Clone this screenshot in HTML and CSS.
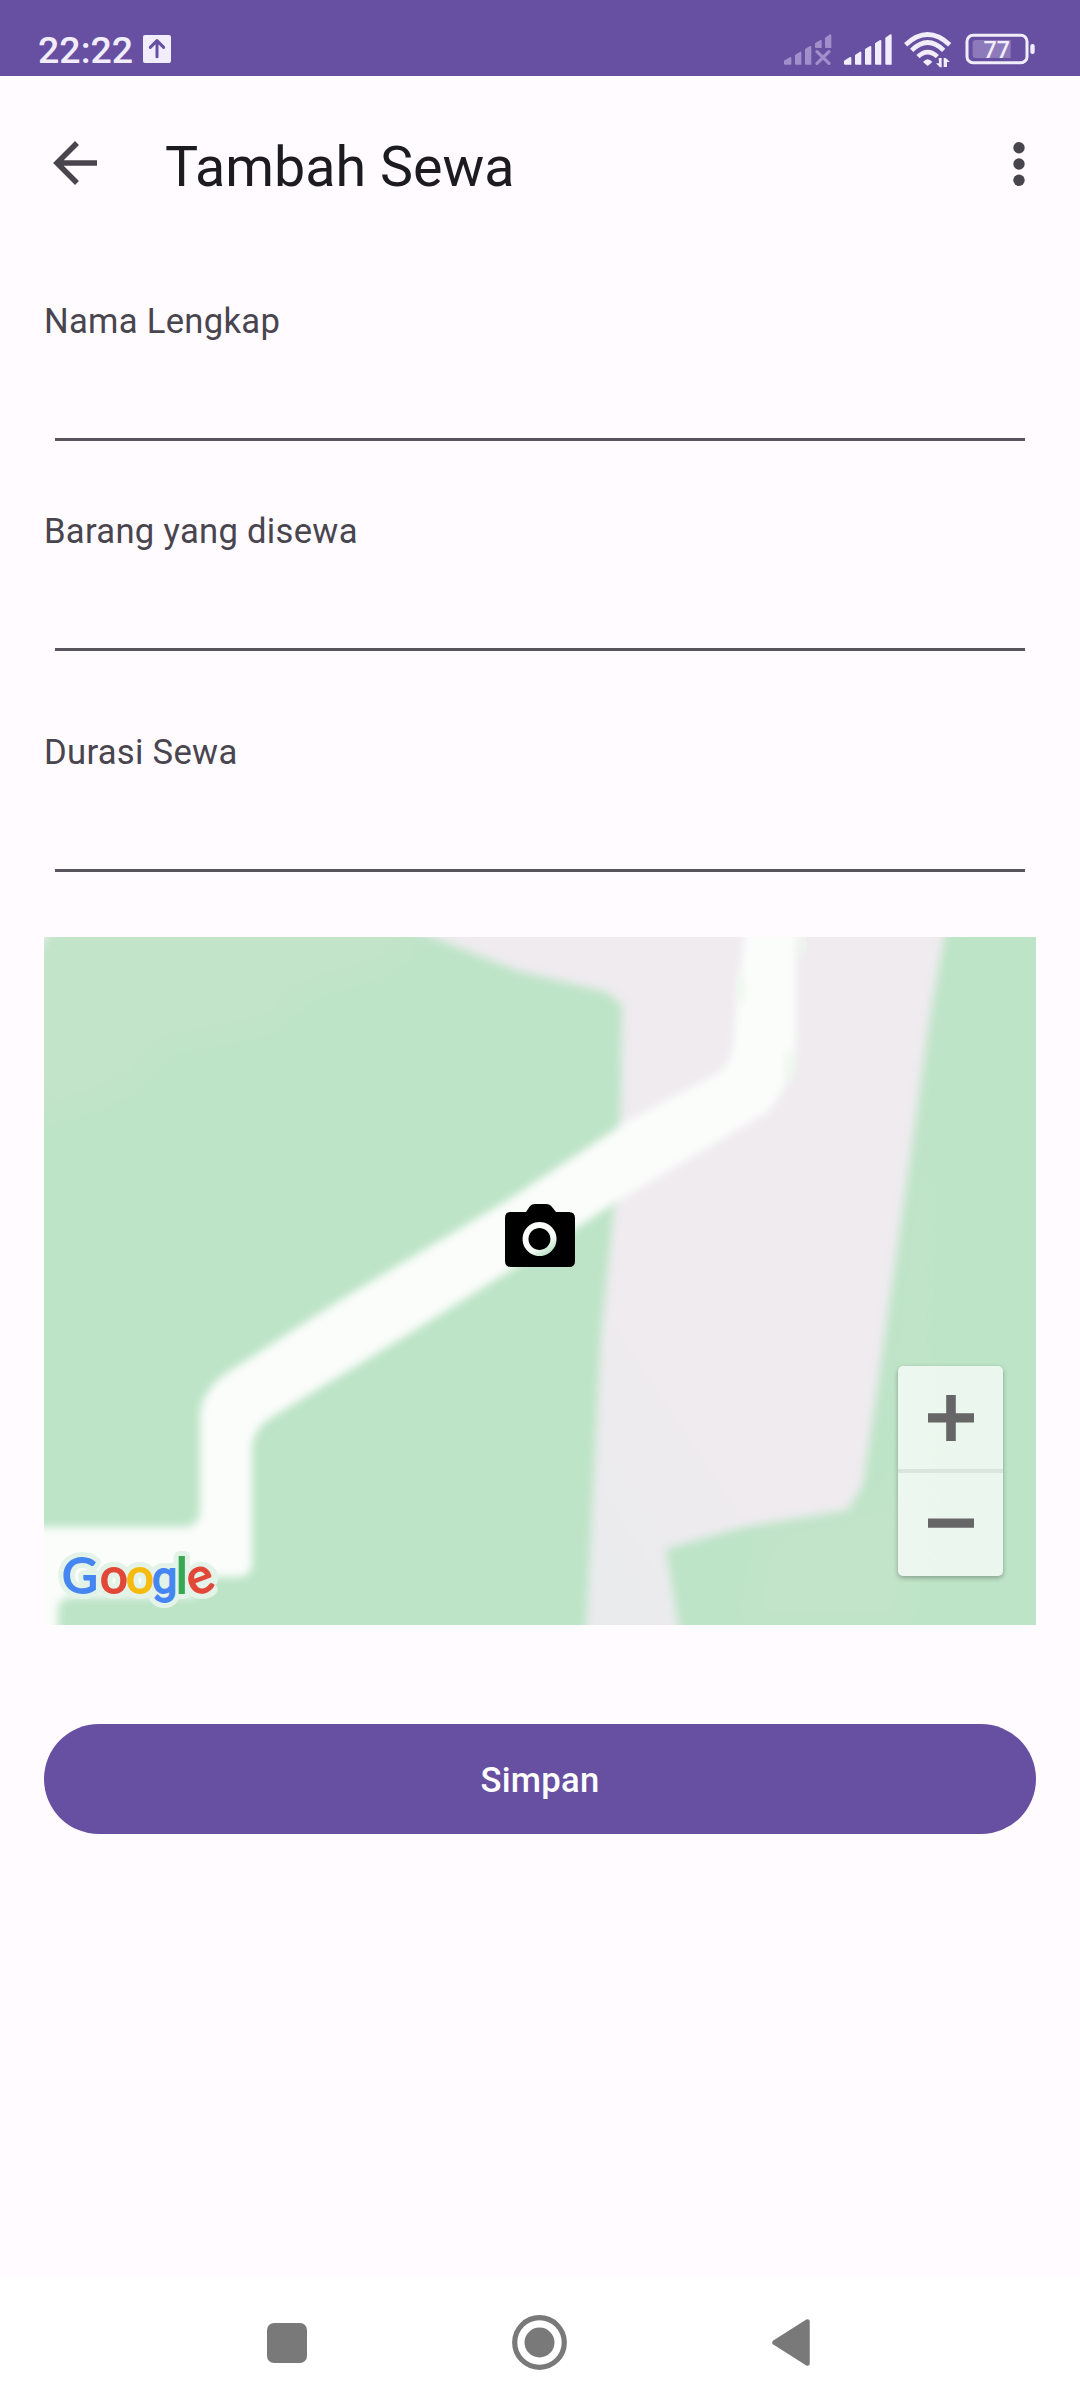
FILE: index.html
```html
<!DOCTYPE html>
<html lang="id">
<head>
<meta charset="utf-8">
<title>Tambah Sewa</title>
<link rel="stylesheet" href="styles.css">
</head>
<body>
<div class="screen">
  <header class="status">
    <span class="clock">22:22</span>
    <svg class="upload" width="28" height="28" viewBox="0 0 84 84">
      <rect width="84" height="84" rx="6" fill="#f1edfb"/>
      <path d="M42 65V17M22 37L42 17l20 20" fill="none" stroke="#674fa2" stroke-width="9" stroke-linecap="round" stroke-linejoin="round"/>
    </svg>
    <svg class="indicators" width="256" height="76" viewBox="70 0 768 228">
      <g fill="#a18fcb">
        <path d="M73 182l19-11q3-1 3 3v20H76q-3 0-3-3zM106 165l15-10q4-1 4 3v36h-16q-3 0-3-3zM136 147l15-9q4-1 4 3v53h-16q-3 0-3-3zM166 130l16-10q4-1 4 3v21h-17q-3 0-3-3zM196 113l15-10q4-1 4 3v38h-16q-3 0-3-3z"/>
        <path d="M172 155l36 35M208 155l-36 35" fill="none" stroke="#a18fcb" stroke-width="10" stroke-linecap="round"/>
      </g>
      <path fill="#f1edfb" d="M253 182l18-11q4-1 4 3v20h-19q-3 0-3-3zM286 165l15-10q4-1 4 3v36h-16q-3 0-3-3zM316 147l15-9q4-1 4 3v53h-16q-3 0-3-3zM346 130l15-10q4-1 4 3v71h-16q-3 0-3-3zM377 113l15-10q4-1 4 3v88h-16q-3 0-3-3z"/>
      <g fill="none" stroke="#f1edfb" stroke-width="14">
        <path d="M438 134Q504 73 570 134"/>
        <path d="M456 151Q504 104 552 151"/>
        <path d="M475 170Q504 143 533 170"/>
      </g>
      <path d="M490 186q14-16 28 0l-14 12z" fill="#f1edfb"/>
      <path d="M529 190h9l-1-16h9v28h-5zM552 174h6l13 12h-9v15h-10z" fill="#f1edfb"/>
      <rect x="622" y="106" width="180" height="82" rx="18" fill="none" stroke="#f1edfb" stroke-width="9"/>
      <path d="M648 120h105v54H648q-9 0-9-9v-36q0-9 9-9z" fill="#8d7abb"/>
      <rect x="812" y="132" width="13" height="30" rx="6" fill="#f1edfb"/>
      <text class="charge" x="711" y="174">77</text>
    </svg>
  </header>

  <div class="toolbar">
    <svg class="back" width="44" height="44" viewBox="0 0 44 44" fill="none" stroke="#49454f" stroke-width="5.5">
      <path d="M44 22H4M24 2L4 22l20 20"/>
    </svg>
    <h1 class="title">Tambah Sewa</h1>
    <svg class="more" width="12" height="44" viewBox="0 0 12 44" fill="#49454f">
      <circle cx="6" cy="5.7" r="5.7"/><circle cx="6" cy="22" r="5.7"/><circle cx="6" cy="38.3" r="5.7"/>
    </svg>
  </div>

  <main class="form">
    <label class="field"><span class="label">Nama Lengkap</span><input class="input" type="text"></label>
    <label class="field"><span class="label">Barang yang disewa</span><input class="input" type="text"></label>
    <label class="field last"><span class="label">Durasi Sewa</span><input class="input" type="text"></label>

    <div class="map">
      <svg width="992" height="688" viewBox="0 0 992 688">
        <defs>
          <filter id="soft" x="-5%" y="-5%" width="110%" height="110%"><feGaussianBlur stdDeviation="5"/></filter>
          <filter id="edge" x="-5%" y="-5%" width="110%" height="110%"><feGaussianBlur stdDeviation="4"/></filter>
          <filter id="lens" x="-5%" y="-5%" width="110%" height="110%"><feGaussianBlur stdDeviation=".6"/></filter>
          <filter id="wide" x="-20%" y="-20%" width="140%" height="140%"><feGaussianBlur stdDeviation="14"/></filter>
          <linearGradient id="land" gradientUnits="userSpaceOnUse" x1="560" y1="620" x2="680" y2="540">
            <stop offset="0" stop-color="#eaebed"/><stop offset="1" stop-color="#efebef"/>
          </linearGradient>
        </defs>
        <rect width="992" height="688" fill="#bde4c7"/>
        <path d="M-30-30H390L350 30 260 55 230 90 120 110 90 150 0 180-30 200z" fill="#c2e4c9" filter="url(#wide)"/>
        <path d="M900 0L865 688H700L720 590 850 560z" fill="#c2e4c9" filter="url(#wide)"/>
        <path d="M-20-20H14L-8 20H-20z" fill="#ebebed" filter="url(#soft)"/>
        <path d="M340-20L378-4 474 34 562 55 578 68 576 195 567 300 557 396 541 710H638L622 612 700 590 804 573 819 548 838 419 861 258 886 80 904-20z" fill="url(#land)" filter="url(#soft)"/>
        <path d="M-30 580H145" stroke="#dbe8e1" stroke-width="16" fill="none" filter="url(#soft)"/>
        <path d="M-30 590H140Q156 590 156 572V480Q156 455 184 435L298 362 467 261 584 184 670 138Q686 129 689 110L692 70 704-30H760L752 20V98Q752 143 724 175L571 266 467 333 363 398 228 480Q208 493 208 512V625Q208 640 194 640H160L150 660H28Q13 661 14 675V710H-30z" fill="#fbfdfb" filter="url(#edge)"/>
        <path d="M60 700Q90 678 125 700z" fill="#dfe9e2" filter="url(#edge)"/>
        <path d="M759 0v16M696 40v24M745 115v28" stroke="#ecf8eb" stroke-width="8" fill="none" filter="url(#edge)"/>
        <path filter="url(#lens)" fill="#000" fill-rule="evenodd" d="M466 275H482L486 269Q488 267 491 267H502Q506 267 508 270L512 275H525Q531 275 531 281V324Q531 330 525 330H467Q461 330 461 324V281Q461 275 466 275zM495.500 285a17 17 0 1 0 .1 0zM495.500 291a11 11 0 1 1-.1 0z"/>
        <g class="google google-halo" aria-hidden="true">
          <text x="18" y="656">G</text><text x="56" y="656">o</text><text x="82" y="656">o</text><text class="narrow" x="108" y="656">g</text><text x="132" y="656">l</text><text x="144" y="656">e</text>
        </g>
        <g class="google">
          <text x="18" y="656" fill="#4586f2" stroke="#4586f2">G</text><text x="56" y="656" fill="#e24839" stroke="#e24839">o</text><text x="82" y="656" fill="#f6bb10" stroke="#f6bb10">o</text><text class="narrow" x="108" y="656" fill="#4586f2" stroke="#4586f2">g</text><text x="132" y="656" fill="#38a856" stroke="#38a856">l</text><text transform="rotate(-20 156 645)" x="144" y="656" fill="#e24839" stroke="#e24839">e</text>
        </g>
      </svg>
      <div class="zoom">
        <button class="zoom-btn" aria-label="Perbesar"><svg width="46" height="46" viewBox="0 0 46 46"><path d="M0 18.200h18.200V0h9.600v18.200H46v9.300H27.800V46h-9.600V27.500H0z" fill="#666"/></svg></button>
        <button class="zoom-btn" aria-label="Perkecil"><svg width="46" height="46" viewBox="0 0 46 46"><path d="M0 16.500h46v9.300H0z" fill="#666"/></svg></button>
      </div>
    </div>

    <button class="save">Simpan</button>
  </main>

  <nav class="navbar">
    <svg width="40" height="40" viewBox="0 0 40 40"><rect width="40" height="40" rx="7" fill="#797979"/></svg>
    <svg width="55" height="55" viewBox="0 0 55 55"><circle cx="27.500" cy="27.500" r="24.800" fill="none" stroke="#797979" stroke-width="5.200"/><circle cx="27.500" cy="27.500" r="15" fill="#797979"/></svg>
    <svg width="38" height="47" viewBox="0 0 38 47"><path d="M2.500 23.500L35.500 2.500v42z" fill="#797979" stroke="#797979" stroke-width="4.500" stroke-linejoin="round"/></svg>
  </nav>
</div>
</body>
</html>
```

FILE: styles.css
```css
* { box-sizing: border-box; }
body { margin: 0; background: #fffbff; font-family: Roboto, "Noto Sans", sans-serif; }
svg { display: block; flex: none; }
button { border: 0; padding: 0; font-family: inherit; }

.screen { width: 1080px; height: 2408px; display: flex; flex-direction: column; overflow: hidden; }

.status { height: 76px; flex: none; display: flex; align-items: flex-start; background: #674fa2; padding-left: 38px; padding-right: 41px; }
.clock { width: 105px; margin-top: 28px; font-size: 37.5px; line-height: 44px; font-weight: 500; color: #f1edfb; }
.upload { margin-top: 35px; }
.indicators { margin-left: auto; margin-right: 0; }
.charge { font-size: 70px; font-weight: 500; text-anchor: middle; fill: #f1edfb; }

.toolbar { height: 176px; flex: none; display: flex; align-items: center; padding: 0 55px 0 53px; }
.back { margin-bottom: 3px; }
.title { margin: 6px 0 0 68px; flex: 1; font-size: 55.6px; line-height: 72px; font-weight: 400; color: #1c1b1f; }

.form { flex: 1; display: flex; flex-direction: column; padding: 46px 44px 0; }
.field { display: flex; flex-direction: column; margin-bottom: 67px; }
.field:nth-child(2) { margin-bottom: 78px; }
.field.last { margin-bottom: 65px; }
.label { height: 46px; line-height: 46px; font-size: 34.65px; letter-spacing: .28px; color: #49454f; }
.input { height: 97px; margin: 0 11px; padding: 0; border: 0; border-bottom: 3px solid #58545e; background: transparent; font: 400 40px Roboto, sans-serif; outline: 0; }

.map { position: relative; width: 992px; height: 688px; overflow: hidden; }
.google { font-family: Lato, sans-serif; font-size: 49px; font-weight: 400; stroke-width: 1.8px; }
.google .narrow { font-family: Roboto, sans-serif; font-size: 45px; font-weight: 400; }
.google-halo { fill: #e4f3e8; stroke: #e4f3e8; stroke-width: 12px; stroke-linejoin: round; }
.zoom { position: absolute; right: 33px; bottom: 49px; width: 105px; height: 210px; display: flex; flex-direction: column; border-radius: 5px; background: rgba(255, 255, 255, .7); box-shadow: 0 2px 5px rgba(0, 0, 0, .3); }
.zoom-btn { flex: 1; display: flex; align-items: center; justify-content: center; background: transparent; }
.zoom-btn + .zoom-btn { border-top: 4px solid #dae5dd; }

.save { height: 110px; margin-top: 99px; padding-top: 1px; border-radius: 55px; background: #674fa2; color: #fff; font-size: 34.65px; font-weight: 500; letter-spacing: .25px; line-height: 110px; }

.navbar { height: 131px; flex: none; display: flex; align-items: center; justify-content: space-between; padding: 0 270px 0 267px; background: #fff; }
```
